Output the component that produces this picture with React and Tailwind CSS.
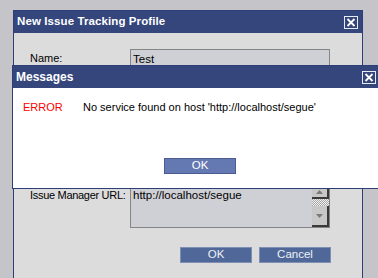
import React from 'react';

const font = { fontFamily: '"Liberation Sans", Arial, sans-serif' };

function CloseBox({ className = '' }) {
  return (
    <div className={`flex items-center justify-center border border-[#e8ecf4] w-[14px] h-[13px] ${className}`}>
      <svg width="10" height="9" viewBox="0 0 10 9">
        <path d="M1.5 1 L8.5 8 M8.5 1 L1.5 8" stroke="#ffffff" strokeWidth="1.8" />
      </svg>
    </div>
  );
}

function BlueButton({ children, className = '' }) {
  return (
    <div className={`flex items-center justify-center h-[16px] w-[72px] bg-[#4f6899] border border-[#7f8fb3] text-[#eef0f6] text-[11.5px] ${className}`}>
      {children}
    </div>
  );
}

export default function App() {
  return (
    <div className="relative w-[378px] h-[278px] overflow-hidden bg-[#c5c5c9] text-black" style={font}>
      {/* 背后的配置对话框 */}
      <div className="ml-[13px] mt-[10px] w-[350px] h-[300px] border border-[#2e3f78] bg-[#dddcdd] flex flex-col">
        <div className="h-[22px] bg-[#34467c] flex items-center justify-between pl-[3px] pr-[4px]">
          <span className="text-white font-bold text-[11.5px] tracking-[0.1px]">New Issue Tracking Profile</span>
          <CloseBox />
        </div>
        <div className="flex mt-[16px] pl-[16px]">
          <div className="w-[100px] text-[11px] pt-[1px]">Name:</div>
          <div className="w-[200px] h-[20px] border border-[#858585] bg-[#cfd0d6] text-[11.5px] pl-[2px] pt-[1px]">Test</div>
        </div>
        <div className="flex mt-[118px] pl-[16px]">
          <div className="w-[100px] text-[11px] tracking-[-0.3px] whitespace-nowrap">Issue Manager URL:</div>
          <div className="w-[200px] h-[41px] border border-[#858585] border-t-0 bg-[#cfd0d6] flex">
            <div className="flex-1 text-[11.5px] pl-[2px]">http://localhost/segue</div>
            <div className="w-[17px] flex flex-col">
              <div className="h-[12px] bg-[#c8c8c8] border-r-2 border-b-2 border-[#3a3a3a] flex items-center justify-center">
                <svg width="7" height="4" viewBox="0 0 7 4"><path d="M0 4 L3.5 0 L7 4 Z" fill="#7a7a7a" /></svg>
              </div>
              <div className="h-[7px] bg-[repeating-conic-gradient(#f0f0f0_0_25%,#a8a8a8_0_50%)] bg-[length:2px_2px]" />
              <div className="flex-1 bg-[#c8c8c8] border-r-2 border-b-2 border-[#3a3a3a] flex items-center justify-center">
                <svg width="7" height="4" viewBox="0 0 7 4"><path d="M0 0 L3.5 4 L7 0 Z" fill="#7a7a7a" /></svg>
              </div>
            </div>
          </div>
        </div>
        <div className="flex justify-end gap-[7px] mt-[19px] pr-[31px]">
          <BlueButton>OK</BlueButton>
          <BlueButton>Cancel</BlueButton>
        </div>
      </div>

      {/* 消息对话框 */}
      <div className="absolute left-[12px] top-[65px] w-[380px] border border-[#2e3f78] bg-white">
        <div className="h-[22px] bg-[#34467c] flex items-center pl-[3px]">
          <span className="text-white font-bold text-[12px]">Messages</span>
          <CloseBox className="ml-auto mr-[15px]" />
        </div>
        <div className="h-[100px] flex flex-col">
          <div className="flex mt-[11px] text-[11px]">
            <span className="w-[70px] pl-[10px] text-[#ff0000]">ERROR</span>
            <span>No service found on host 'http://localhost/segue'</span>
          </div>
          <div className="mt-[42px] pl-[151px]">
            <div className="flex items-center justify-center h-[16px] w-[72px] bg-[#6479b2] border border-[#4a5c92] text-white text-[11.5px]">OK</div>
          </div>
        </div>
      </div>
    </div>
  );
}
